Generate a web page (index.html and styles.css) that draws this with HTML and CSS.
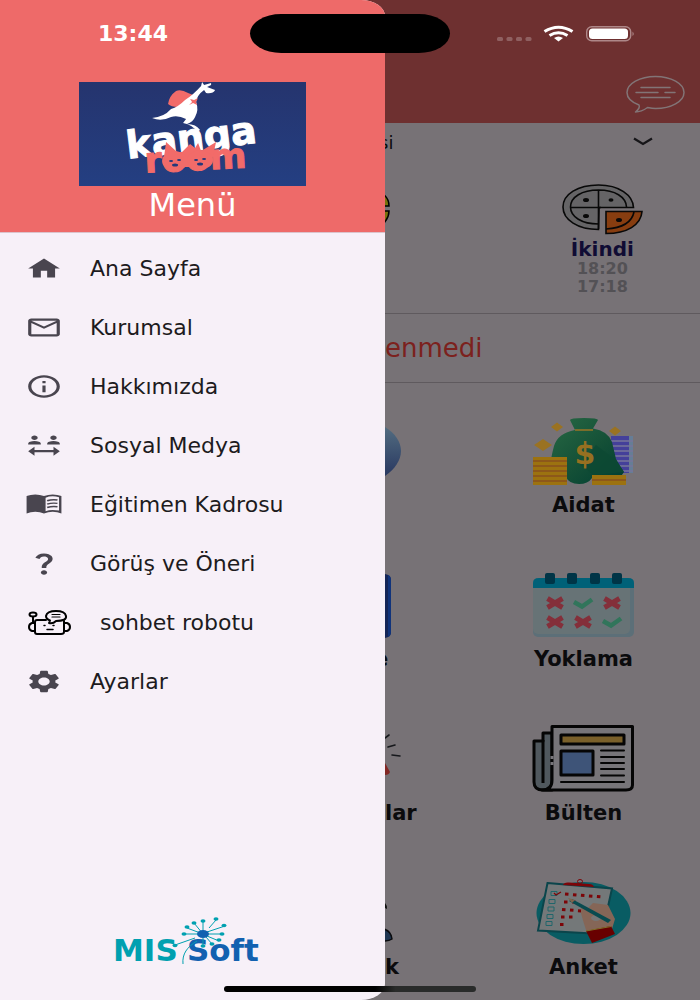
FILE: index.html
```html
<!DOCTYPE html>
<html lang="tr">
<head>
<meta charset="utf-8">
<meta name="viewport" content="width=device-width, initial-scale=1">
<title>Kanga Room</title>
<link rel="stylesheet" href="styles.css">
</head>
<body>
<div class="app">
  <div class="page">
    <header class="topbar">
      <button class="chat" aria-label="Mesajlar">
        <svg width="60" height="40" viewBox="0 0 60 40" fill="none" stroke="#827476" stroke-width="1.5" stroke-linecap="round" stroke-linejoin="round">
          <path d="M13 30C5 27 1 22 1 17.500C1 8.500 14 1.500 29.500 1.500S58 8.500 58 17.500S45 33.500 29.500 33.500C27 33.500 24 33 21.500 32.500C18 35 14 37 9.500 37C12 35 14 32 13 30Z"/>
          <path d="M15 12.500H44M10 17.500H32M39 17.500H49M15 22.500H44"/>
        </svg>
      </button>
    </header>
    <button class="classbar"><span class="under-edge">si</span>
      <svg width="20" height="10" viewBox="0 0 20 10" fill="none" stroke="#161518" stroke-width="2.200"><path d="M1 1.500L10 7L19 1.500"/></svg>
    </button>
    <section class="meals">
      <svg class="edge-art" width="6" height="52" viewBox="0 0 6 52" fill="#77720c" stroke="#000" stroke-width="1.500"><path d="M-2 11C2 14 4 18 4 23H-2M-2 28H4C4 33 2 37-2 41"/></svg>
      <div class="meal">
        <svg width="82" height="52" viewBox="0 0 82 52" fill="none" stroke="#080808" stroke-width="1.600">
          <path fill="#656466" d="M37.500 46.500C17 46.500 2 37 2 24S17 2 37.500 2S72 12 72.500 24.500H38Z"/>
          <path d="M37.500 41C21 41 9.500 34 9.500 24S21 7 37.500 7S65 14 65.500 24M37.500 7V46M9.500 24.500H40"/>
          <path fill="#873d10" d="M45 28.500H81C80 42 66 50.500 45 50.500Z"/><path d="M73 29C71 39 61 45 45 46"/>
          <g fill="#080808" stroke="none"><ellipse cx="25" cy="17" rx="3" ry="2"/><ellipse cx="50" cy="17" rx="2.500" ry="1.700"/><ellipse cx="25" cy="33" rx="3" ry="2"/><ellipse cx="58" cy="37" rx="3" ry="2"/></g>
        </svg>
        <h2 class="meal-name">İkindi</h2>
        <span class="meal-time">18:20</span>
        <span class="meal-time">17:18</span>
      </div>
    </section>
    <p class="notice">enmedi</p>
    <section class="tiles">
      <div class="side">
        <svg class="edge-art" width="17" height="68" viewBox="0 0 17 68"><defs><linearGradient id="globe" x2="0" y2="1"><stop stop-color="#526c80"/><stop offset="1" stop-color="#293861"/></linearGradient></defs><path fill="url(#globe)" d="M0 10C10 16 16 25 16 34S10 52 0 59Z"/></svg>
      </div>
      <a class="tile" href="#aidat">
        <svg class="art" viewBox="0 0 102 68">
          <defs><linearGradient id="bag" x2="1" y2="1"><stop stop-color="#286944"/><stop offset=".55" stop-color="#145037"/><stop offset="1" stop-color="#003d32"/></linearGradient></defs>
          <path fill="#44409a" d="M79 19H97V56H79z"/><path fill="#667d96" d="M97 19h4v37h-4z"/>
          <path stroke="#77759a" stroke-width="1.500" d="M79 24H101M79 29H101M79 34H101M79 39H101M79 44H101M79 49H101M79 54H101"/>
          <path fill="url(#bag)" d="M38 3Q38 1 52 1T66 3L61 11.500Q76 14 80 25L84 42Q88 49 92 55Q89 61 81 61H60Q56 67 47 67Q37 67 34 60L17 55Q19 40 22 29Q26 16 43 13L38 3Z"/>
          <path fill="#0c4933" d="M64 28L84 43Q88 49 92 55L62 58L48 48Z" opacity=".8"/>
          <path stroke="#9b7424" stroke-width="1.500" d="M43 13H61"/>
          <g fill="#9a7222"><path d="M25 5.500L31 10L25 14.500L19 10zM83 9.500L89 14L83 18.500L77 14zM11 22L20 28L11 34L2 28z"/></g>
          <text class="dollar" x="53" y="47" text-anchor="middle">$</text>
          <path fill="#9c7210" d="M1 40H35V68H1zM60 58H94V68H60z"/>
          <path stroke="#88501e" stroke-width="1.500" d="M1 44H35M1 49H35M1 54H35M1 59H35M1 64H35M60 63H94"/>
        </svg>
        <span class="label">Aidat</span>
      </a>
      <div class="side">
        <svg class="edge-art" width="7" height="68" viewBox="0 0 7 68"><path fill="#142557" d="M0 3Q6 4 6 9V61Q6 66 0 67z"/><path fill="#10337b" d="M3 4Q6 5 6 9V61Q6 65 3 66z"/></svg>
        <span class="label e-cut">e</span>
      </div>
      <a class="tile" href="#yoklama">
        <svg class="art" viewBox="0 0 102 68">
          <rect x="1" y="7" width="101" height="59" rx="5" fill="#5c6f78"/><rect x="1" y="7" width="97" height="56" rx="5" fill="#677376"/>
          <path fill="#006178" d="M1 17V12Q1 7 7 7H96Q102 7 102 12V17z"/>
          <g fill="#003547"><rect x="13" y="2" width="10" height="11" rx="2"/><rect x="35" y="2" width="10" height="11" rx="2"/><rect x="58" y="2" width="10" height="11" rx="2"/><rect x="80" y="2" width="10" height="11" rx="2"/></g>
          <path stroke="#842f3a" stroke-width="5" d="M15.500 27.500L30.500 36.500M30.500 27.500L15.500 36.500M72.500 27.500L87.500 36.500M87.500 27.500L72.500 36.500M15.500 46.500L30.500 55.500M30.500 46.500L15.500 55.500M43.500 46.500L58.500 55.500M58.500 46.500L43.500 55.500"/>
          <path fill="none" stroke="#31755b" stroke-width="4.500" d="M42 31L50 35.500L60 28.500M71 50L79 54.500L89 47.500"/>
        </svg>
        <span class="label">Yoklama</span>
      </a>
      <div class="side">
        <svg class="edge-art" width="18" height="68" viewBox="0 0 18 68"><path stroke="#16181c" stroke-width="1.600" stroke-linecap="round" d="M0 13L4 10M3 22L10 20M7 30L15 31"/><path fill="#832724" d="M0 38L5 47Q4 50 0 50z"/></svg>
        <span class="label">lar</span>
      </div>
      <a class="tile" href="#bulten">
        <svg class="art" viewBox="0 0 102 68" fill="none" stroke="#050505" stroke-width="3" stroke-linejoin="round">
          <path fill="#50585e" d="M20 8H11V16H2V57Q2 65 11 65H20z"/>
          <path fill="#777579" d="M10 65Q20 65 20 55V1.500H100.500V60Q100.500 65 94 65Z"/>
          <path d="M11 15V58"/><path stroke="#777579" d="M20 31V34M20 37V40"/>
          <rect x="29" y="10" width="63" height="9" fill="#7a602a"/><rect x="29" y="26" width="32" height="24" fill="#3e5478"/>
          <path stroke-width="2" stroke-linecap="round" d="M69 25.500H92M69 32H92M69 38H92M69 44H92M69 50.500H92M29 57H92"/>
        </svg>
        <span class="label">Bülten</span>
      </a>
      <div class="side">
        <svg class="edge-art" width="9" height="68" viewBox="0 0 9 68"><path fill="#111" d="M0 24Q2 26 2 30L0 29z"/><path fill="#203753" stroke="#0a0b0e" stroke-width="1.500" d="M-1 50Q6 52 7 60Q4 62-1 62z"/></svg>
        <span class="label">k</span>
      </div>
      <a class="tile" href="#anket">
        <svg class="art" viewBox="0 0 102 68">
          <ellipse cx="51.500" cy="34" rx="47" ry="31" fill="#095c63"/>
          <path fill="#747879" stroke="#0b454b" stroke-width="2" d="M15.500 4L80 9.500L70 55L6 51.500z"/>
          <path fill="#7c0508" d="M31 6Q32 3 37 3.500L57 5Q61 5 62 8z"/><ellipse cx="48" cy="2.500" rx="2.500" ry="2" fill="none" stroke="#7c0508"/>
          <path fill="none" stroke="#20666b" d="M19 12.500h6v4h-6zM17 20.500h6v4h-6zM16 28h6v4h-6zM15 35.500h6v4h-6zM14 42.500h6v4h-6z"/>
          <path fill="none" stroke="#7c0508" stroke-width="1.300" d="M22 14L24 16L29 13"/>
          <path stroke="#7c0508" stroke-width="3" stroke-dasharray="3.500 4.500" d="M33 15L70 18M32 23H44M30 30.500L50 32M29 38H41M28 45.500H32"/>
          <path fill="#856657" d="M49 28Q52 27 55 30L61 24L76 26L83 40L80 50L55 54Q51 42 49 34z"/>
          <ellipse cx="64" cy="39" rx="5" ry="3" fill="#777"/>
          <path fill="#094b50" d="M40 20L79 41L76 44L37 22z"/><path fill="#80634c" d="M36 19L43 21L40 24z"/>
          <path fill="#680000" d="M54 52L79 47L83 55L60 64z"/><path stroke="#807028" d="M54 52L79 47.500"/>
        </svg>
        <span class="label">Anket</span>
      </a>
    </section>
  </div>

  <aside class="drawer">
    <div class="drawer-head">
      <svg class="brand" viewBox="0 0 227 104" role="img" aria-label="kanga room">
        <defs><linearGradient id="navy" x2="0" y2="1"><stop stop-color="#25346e"/><stop offset="1" stop-color="#243f82"/></linearGradient></defs>
        <path fill="url(#navy)" d="M0 0h227v104H0z"/>
        <path fill="#f26b69" d="M89 22Q90 14 97 9Q102 7 109 11L114 13L99 25Q92 25 89 22Z"/>
        <path fill="#fff" d="M123 0L125 3L132 1L132 3L128 5L136 8Q134 12 127 11L125 8Q118 13 117 20Q120 28 116 35Q114 40 108 42Q117 42 121 48L118 50Q114 43 104 41L107 37Q99 33 92 35Q82 40 73 36Q85 35 92 27Q99 25 106 18Q114 13 122 4z"/>
        <path fill="#f26b69" d="M111 17L115 18L119 16L117 20L118 23L114 21L110 23L113 20z"/>
        <g transform="rotate(-7 111 66)"><text class="kanga" x="48" y="69">kanga</text></g>
        <g transform="rotate(-3 120 85)"><text class="room" x="66" y="88">room</text></g>
        <g fill="#f26b69"><path d="M85 75L87 60L98 70H103L111 62L116 66L119 61L122 69L137 60L133 78L124 85L105 85L90 83z"/><ellipse cx="96" cy="79" rx="13" ry="9.500"/><ellipse cx="121" cy="78" rx="13" ry="9.500"/></g>
        <g fill="#25387a"><ellipse cx="92" cy="79" rx="2" ry="1"/><ellipse cx="100" cy="78" rx="2" ry="1"/><ellipse cx="96" cy="83" rx="3" ry="1.500"/><ellipse cx="117" cy="78" rx="2" ry="1"/><ellipse cx="125" cy="77" rx="2" ry="1"/><ellipse cx="121" cy="82" rx="3" ry="1.500"/></g>
      </svg>
      <h1 class="title">Menü</h1>
    </div>
    <nav class="menu">
      <a class="item" href="#ana"><svg class="ico" viewBox="0 0 24 24" preserveAspectRatio="none"><path d="M10 20v-6h4v6h5v-8h3L12 3 2 12h3v8z"/></svg>Ana Sayfa</a>
      <a class="item" href="#kurumsal"><svg class="ico" viewBox="0 0 24 24" preserveAspectRatio="none"><path d="M22 6c0-1.100-.9-2-2-2H4c-1.100 0-2 .9-2 2v12c0 1.100.9 2 2 2h16c1.100 0 2-.9 2-2V6zm-2 0l-8 5-8-5h16zm0 12H4V8l8 5 8-5v10z"/></svg>Kurumsal</a>
      <a class="item" href="#hakkimizda"><svg class="ico" viewBox="0 0 24 24" preserveAspectRatio="none"><path d="M11 7h2v2h-2zm0 4h2v6h-2zm1-9C6.480 2 2 6.480 2 12s4.480 10 10 10 10-4.480 10-10S17.520 2 12 2zm0 18c-4.410 0-8-3.590-8-8s3.590-8 8-8 8 3.590 8 8-3.590 8-8 8z"/></svg>Hakkımızda</a>
      <a class="item" href="#sosyal"><svg class="ico" viewBox="0 0 24 24" preserveAspectRatio="none"><path d="M4 5c0-1.110.89-2 2-2s2 .89 2 2-.89 2-2 2-2-.89-2-2zm4.780 3.580C7.930 8.210 6.990 8 6 8s-1.930.21-2.780.58C2.480 8.900 2 9.620 2 10.430V11h8v-.57c0-.81-.48-1.530-1.220-1.850zM18 7c1.110 0 2-.89 2-2s-.89-2-2-2-2 .89-2 2 .89 2 2 2zm2.780 1.580C19.930 8.210 18.990 8 18 8s-1.930.21-2.780.58C14.480 8.900 14 9.620 14 10.430V11h8v-.57c0-.81-.48-1.530-1.220-1.850zM22 17l-4-4v3H6v-3l-4 4 4 4v-3h12v3l4-4z"/></svg>Sosyal Medya</a>
      <a class="item" href="#kadro"><svg class="ico" viewBox="0 0 24 24" preserveAspectRatio="none"><path fill-rule="evenodd" d="M1 4.500Q3.500 3 6.500 3T12 4.500Q14.500 3 17.500 3T23 4.500V20Q20.500 18.500 17.500 18.500T12 20Q9.500 18.500 6.500 18.500T1 20zM13 6V18Q15 16.800 17.500 16.800Q19.500 16.800 21.500 17.300V5.500Q19.500 4.700 17.500 4.700Q15 4.700 13 6z"/><path fill="none" stroke="#49454f" stroke-width="1.300" d="M14 8.700Q17 7.300 20.500 8M14 11.700Q17 10.300 20.500 11M14 14.700Q17 13.300 20.500 14"/></svg>Eğitimen Kadrosu</a>
      <a class="item" href="#oneri"><svg class="ico" viewBox="0 0 24 24" preserveAspectRatio="none"><path d="M11.070 12.850c.77-1.390 2.250-2.210 3.110-3.440.91-1.290.4-3.700-2.180-3.700-1.690 0-2.520 1.280-2.870 2.340L6.540 6.960C7.250 4.830 9.180 3 11.990 3c2.350 0 3.960 1.070 4.780 2.410.7 1.150 1.110 3.300.03 4.900-1.200 1.770-2.350 2.310-2.970 3.450-.25.46-.35.76-.35 2.240h-2.890c-.01-.78-.13-2.050.48-3.150zM14 20c0 1.100-.9 2-2 2s-2-.9-2-2 .9-2 2-2 2 .9 2 2z"/></svg>Görüş ve Öneri</a>
      <a class="item item-bot" href="#robot"><svg class="bot" width="44" height="26" viewBox="0 0 44 26" fill="none" stroke="#000" stroke-width="2" stroke-linejoin="round" stroke-linecap="round"><path d="M18 10H9Q7 10 7 12V22Q7 24 9 24H33Q36 24 36 22V11M7 13H4Q1 14 1 17T4 21H7M36 13H39Q42 14 42 17T39 21H36M5 7V13"/><ellipse cx="5" cy="4.500" rx="3.500" ry="2"/><path fill="#f7f0f8" d="M21 13L22 10.500Q18 9 18 6Q19 1 28 1T38 6T28 11Q25 14 21 13Z"/><path stroke-width="1.200" d="M24 4.500H32M24 7H32"/><path stroke-width="1.500" d="M16 15.500H17M25 15.500H26M19 19.500H25"/></svg>sohbet robotu</a>
      <a class="item" href="#ayarlar"><svg class="ico" viewBox="0 0 24 24" preserveAspectRatio="none"><path d="M19.140 12.940c.04-.3.06-.61.06-.94 0-.32-.02-.64-.07-.94l2.030-1.580c.18-.14.23-.41.12-.61l-1.920-3.320c-.12-.22-.37-.29-.59-.22l-2.390.96c-.5-.38-1.030-.7-1.620-.94l-.36-2.540c-.04-.24-.24-.41-.48-.41h-3.840c-.24 0-.43.17-.47.41l-.36 2.540c-.59.24-1.130.57-1.620.94l-2.390-.96c-.22-.08-.47 0-.59.22L2.740 8.870c-.12.21-.08.47.12.61l2.030 1.580c-.05.3-.09.63-.09.94s.02.64.07.94l-2.030 1.580c-.18.14-.23.41-.12.61l1.920 3.320c.12.22.37.29.59.22l2.390-.96c.5.38 1.030.7 1.620.94l.36 2.540c.05.24.24.41.48.41h3.840c.24 0 .44-.17.47-.41l.36-2.540c.59-.24 1.130-.56 1.620-.94l2.390.96c.22.08.47 0 .59-.22l1.920-3.320c.12-.22.07-.47-.12-.61l-2.010-1.580zM12 15.600c-1.980 0-3.600-1.620-3.600-3.600s1.620-3.600 3.600-3.600 3.600 1.620 3.600 3.600-1.620 3.600-3.600 3.600z"/></svg>Ayarlar</a>
    </nav>
    <svg class="vendor" width="160" height="60" viewBox="0 0 160 60" role="img" aria-label="MISSoft">
      <text class="vendor-text" x="0" y="45" fill="#00a0b0">MIS</text><text class="vendor-text" x="74" y="45" fill="#1261b0">Soft</text>
      <path fill="none" stroke="#00a0b0" d="M70 48C69 38 74 31 84 25M90 18V5M90 18L81 7M90 18L74 12M90 18H71M82 22L62 29M96 12L103 4M94 16L112 10M94 18H109M94 20L106 25M93 21L99 28M90 22V30"/>
      <g fill="#00a0b0"><ellipse cx="90" cy="5" rx="2.500" ry="1.700"/><ellipse cx="81" cy="7" rx="2.500" ry="1.700"/><ellipse cx="74" cy="11" rx="2.500" ry="1.700"/><ellipse cx="71" cy="18" rx="2.500" ry="1.700"/><ellipse cx="62" cy="29.500" rx="2.500" ry="1.700"/><ellipse cx="103" cy="3" rx="2.500" ry="1.700"/><ellipse cx="111" cy="9.500" rx="2.500" ry="1.700"/><ellipse cx="109" cy="18" rx="2.500" ry="1.700"/><ellipse cx="106" cy="24" rx="2.500" ry="1.700"/><ellipse cx="99" cy="28" rx="2.500" ry="1.700"/><ellipse cx="90" cy="30" rx="2.500" ry="1.700"/></g>
      <ellipse cx="90" cy="18" rx="6" ry="4" fill="#1261b0"/>
    </svg>
  </aside>

  <div class="status">
    <time class="clock">13:44</time>
    <div class="island"></div>
    <svg class="signals" width="140" height="20" viewBox="0 0 140 20">
      <g fill="#8f6061"><rect x="2" y="13" width="6" height="4" rx="1.500"/><rect x="11.500" y="13" width="6" height="4" rx="1.500"/><rect x="21" y="13" width="6" height="4" rx="1.500"/><rect x="30.500" y="13" width="6" height="4" rx="1.500"/></g>
      <path fill="none" stroke="#fff" stroke-width="3.200" d="M49.500 7.500Q63.500-1 77.500 7.500M54.500 11.500Q63.500 6 72.500 11.500"/><path fill="#fff" d="M59 14Q63.500 11 68 14L63.500 17.500z"/>
      <rect x="91.700" y="2.700" width="44" height="14" rx="5" fill="none" stroke="#ae8788" stroke-width="1.400"/><rect x="94" y="4.500" width="39" height="10.500" rx="3.500" fill="#fff"/><path fill="#ae8788" d="M137.500 7.500Q140 10 137.500 12z"/>
    </svg>
  </div>
  <div class="home-bar"></div>
</div>
</body>
</html>
```
FILE: styles.css
```css
* { box-sizing: border-box; }
body { margin: 0; background: #777276; font-family: "DejaVu Sans", "Noto Sans", sans-serif; }
button { border: 0; padding: 0; background: none; font: inherit; color: inherit; }
a { color: inherit; text-decoration: none; }
h1, h2, p { margin: 0; }
svg { display: block; flex: none; }

.app { position: relative; min-height: 100vh; overflow: hidden; }
.page { color: #0b0b0d; }
.topbar { display: flex; justify-content: flex-end; padding: 75px 14px 8px; background: #6e3030; }
.classbar { display: flex; align-items: center; justify-content: space-between; width: 100%; height: 38px; padding: 0 47px 0 55%; font-size: 18px; }
.under-edge { margin-left: -6px; }

.meals { display: flex; justify-content: space-between; padding: 22px 0 17px 55%; border-bottom: 1px solid #5f5a5e; }
.meal { display: flex; flex-direction: column; align-items: center; width: 62%; }
.meal-name { margin-top: 3px; font-size: 20px; line-height: 22px; color: #100c34; }
.meal-time { font-size: 16px; line-height: 18px; font-weight: bold; color: #535155; }
.notice { padding: 16px 0 16px 55%; border-bottom: 1px solid #5f5a5e; font-size: 26px; line-height: 36px; color: #7c211d; }

.tiles { display: grid; grid-template-columns: 1fr 74%; row-gap: 54px; padding: 34px 0 21px 55%; }
.side { display: flex; flex-direction: column; gap: 8px; }
.tile { display: flex; flex-direction: column; align-items: center; gap: 8px; }
.art { width: 102px; height: 68px; }
.label { font-size: 21px; line-height: 24px; font-weight: bold; }
.e-cut { margin-left: -11px; }
.dollar { font: bold 30px "DejaVu Sans", sans-serif; fill: #967021; }

.drawer { position: absolute; top: 0; bottom: 0; left: 0; width: 55%; display: flex; flex-direction: column; overflow: hidden; border-radius: 0 24px 24px 0 / 0 16px 16px 0; background: #f7f0f8; }
.drawer-head { display: flex; flex-direction: column; align-items: center; padding: 82px 0 8px; border-bottom: 1px solid #dcc3cc; background: #ee6a69; }
.brand { width: 59%; }
.title { font-size: 32px; line-height: 38px; font-weight: normal; color: #fff; }
.kanga, .room { font-family: "DejaVu Sans", sans-serif; font-weight: bold; }
.kanga { font-size: 38px; fill: #fff; stroke: #fff; stroke-width: 1px; }
.room { font-size: 35px; fill: #f26b69; stroke: #f26b69; stroke-width: 1px; }

.menu { display: flex; flex-direction: column; padding: 6px 0; }
.item { display: flex; align-items: center; gap: 27px; height: 59px; padding-left: 25px; font-size: 22px; color: #1d1b20; }
.item-bot { gap: 28px; padding-left: 28px; }
.ico { width: 38px; height: 27px; fill: #49454f; }
.vendor { align-self: center; margin: auto 0 24px; }
.vendor-text { font: bold 31px "DejaVu Sans", sans-serif; }

.status { position: absolute; top: 14px; left: 0; right: 0; display: grid; grid-template-columns: 1fr 200px 1fr; align-items: center; }
.clock { justify-self: center; padding-left: 16px; font-size: 22px; font-weight: bold; color: #fff; }
.island { height: 39px; border-radius: 32px / 20px; background: #000; }
.signals { margin-left: 45px; }
.home-bar { position: absolute; bottom: 8px; left: 32%; right: 32%; height: 6px; border-radius: 3px; background: linear-gradient(90deg, #000 60%, #292b2a 68%); }
```
